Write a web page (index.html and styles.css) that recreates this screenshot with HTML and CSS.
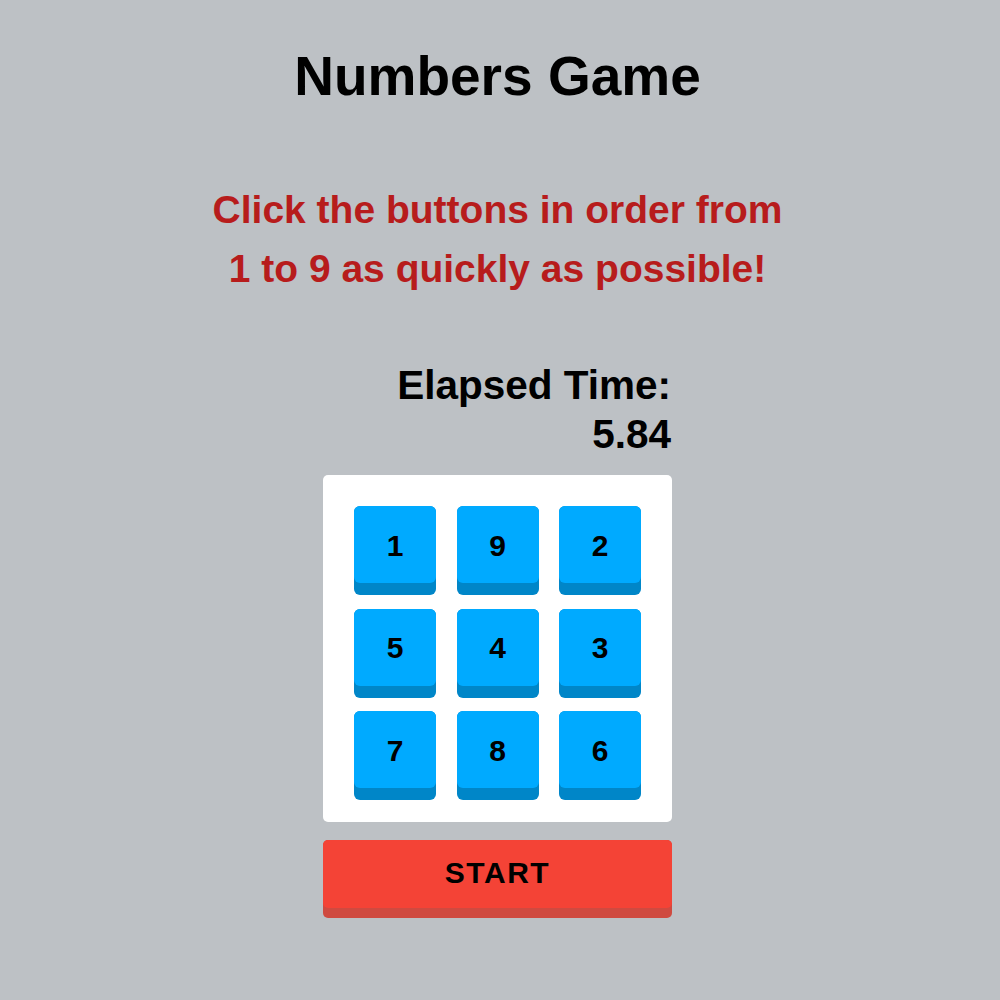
FILE: index.html
```html
<!DOCTYPE html>
<html lang="en">
<head>
<meta charset="utf-8">
<title>Numbers Game</title>
<link rel="stylesheet" href="styles.css">
</head>
<body>
<main class="game">
  <h1 class="title">Numbers Game</h1>
  <p class="instructions">Click the buttons in order from<br>1 to 9 as quickly as possible!</p>
  <div class="panel">
    <div class="timer">
      <div class="timer-label">Elapsed Time:</div>
      <div class="timer-value">5.84</div>
    </div>
    <div class="board">
      <div class="tile"><div class="tile-face">1</div></div>
      <div class="tile"><div class="tile-face">9</div></div>
      <div class="tile"><div class="tile-face">2</div></div>
      <div class="tile"><div class="tile-face">5</div></div>
      <div class="tile"><div class="tile-face">4</div></div>
      <div class="tile"><div class="tile-face">3</div></div>
      <div class="tile"><div class="tile-face">7</div></div>
      <div class="tile"><div class="tile-face">8</div></div>
      <div class="tile"><div class="tile-face">6</div></div>
    </div>
    <div class="start"><div class="start-face">START</div></div>
  </div>
</main>
</body>
</html>
```

FILE: styles.css
```css
html, body {
  margin: 0;
  padding: 0;
  background: #bdc1c5;
}

body {
  padding-right: 5px;
  font-family: "Liberation Sans", Arial, sans-serif;
  font-weight: bold;
  color: #000;
}

.game {
  display: flex;
  flex-direction: column;
  align-items: center;
}

.title {
  margin: 44px 0 0;
  font-size: 55px;
  line-height: 64px;
  font-weight: bold;
}

.instructions {
  margin: 72px 0 0;
  font-size: 39px;
  line-height: 59px;
  color: #b71c1c;
  text-align: center;
}

.panel {
  width: 349px;
  margin-top: 63px;
  display: flex;
  flex-direction: column;
}

.timer {
  text-align: right;
  font-size: 40.5px;
  line-height: 49px;
  margin-right: 1px;
}

.board {
  margin-top: 16px;
  background: #fff;
  border-radius: 5px;
  padding: 31px 31px 22px;
  display: grid;
  grid-template-columns: repeat(3, 82px);
  justify-content: space-between;
  row-gap: 13.5px;
}

.tile {
  background: #0086c8;
  border-radius: 6px;
  padding-bottom: 12px;
  cursor: pointer;
}

.tile-face {
  height: 77px;
  background: #00aaff;
  border-radius: 6px;
  display: flex;
  align-items: center;
  justify-content: center;
  font-size: 30px;
  padding-top: 2px;
  box-sizing: border-box;
}

.start {
  margin-top: 18px;
  background: #cf4a40;
  border-radius: 5px;
  padding-bottom: 10px;
  cursor: pointer;
}

.start-face {
  height: 68px;
  background: #f44336;
  border-radius: 5px;
  display: flex;
  align-items: center;
  justify-content: center;
  font-size: 30px;
  letter-spacing: 1.5px;
  padding-bottom: 3px;
  box-sizing: border-box;
}
```
